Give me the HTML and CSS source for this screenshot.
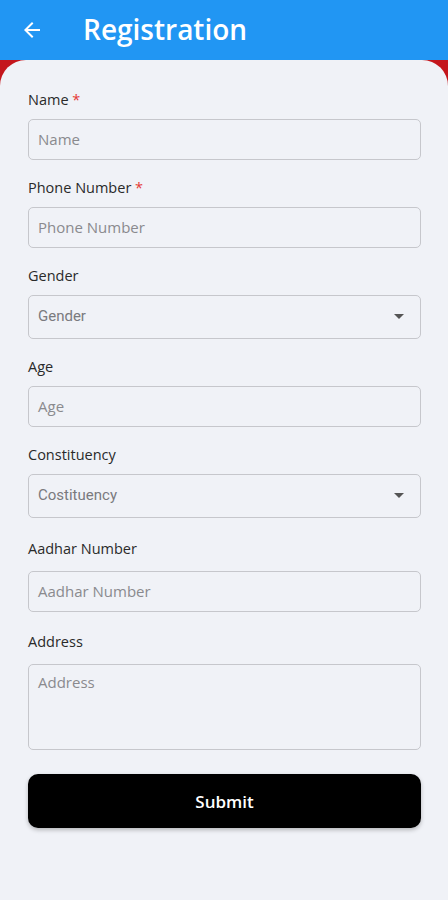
FILE: index.html
```html
<!DOCTYPE html>
<html lang="en">
<head>
<meta charset="utf-8">
<title>Registration</title>
<link rel="stylesheet" href="styles.css">
</head>
<body>
<div class="app">
  <header class="appbar">
    <svg class="back" width="24" height="24" viewBox="0 0 24 24"><path d="M20 11H7.83l5.59-5.59L12 4l-8 8 8 8 1.41-1.41L7.83 13H20v-2z" fill="#fff"/></svg>
    <h1 class="title">Registration</h1>
  </header>
  <main class="sheet">
    <form class="form">
      <div class="field">
        <label class="label">Name <span class="req">*</span></label>
        <div class="input"><span class="ph">Name</span></div>
      </div>
      <div class="field">
        <label class="label">Phone Number <span class="req">*</span></label>
        <div class="input"><span class="ph">Phone Number</span></div>
      </div>
      <div class="field">
        <label class="label">Gender</label>
        <div class="input select"><span class="ph ph-select">Gender</span><span class="caret"></span></div>
      </div>
      <div class="field">
        <label class="label">Age</label>
        <div class="input"><span class="ph">Age</span></div>
      </div>
      <div class="field">
        <label class="label">Constituency</label>
        <div class="input select"><span class="ph ph-select">Costituency</span><span class="caret"></span></div>
      </div>
      <div class="field field-wide">
        <label class="label">Aadhar Number</label>
        <div class="input"><span class="ph">Aadhar Number</span></div>
      </div>
      <div class="field field-wide field-address">
        <label class="label">Address</label>
        <div class="input textarea"><span class="ph">Address</span></div>
      </div>
      <button type="button" class="submit">Submit</button>
    </form>
  </main>
</div>
</body>
</html>
```
FILE: styles.css
```css
* { box-sizing: border-box; }
html, body { margin: 0; padding: 0; }
body {
  width: 448px;
  height: 900px;
  overflow: hidden;
  background: #c4161c;
  font-family: "Open Sans", "Noto Sans", sans-serif;
}
.app {
  display: flex;
  flex-direction: column;
  height: 900px;
}
.appbar {
  height: 60px;
  background: #2196f3;
  display: flex;
  align-items: center;
  padding-left: 20px;
  flex: none;
}
.back { display: block; }
.title {
  margin: 0 0 0 39px;
  color: #fff;
  font-size: 28px;
  font-weight: 600;
  letter-spacing: 0;
  line-height: 1;
  padding-bottom: 2px;
}
.sheet {
  flex: 1;
  background: #f0f2f7;
  border-radius: 26px 26px 0 0;
  padding: 30px 27px 0 28px;
}
.form {
  display: flex;
  flex-direction: column;
  gap: 18px;
}
.field { display: flex; flex-direction: column; gap: 9px; }
.field-wide { gap: 12px; margin-top: 3px; }
.field-address { margin-top: 2px; }
.label {
  font-size: 14.5px;
  line-height: 20px;
  color: #2a2a2a;
}
.req { color: #e53935; }
.input {
  height: 41px;
  border: 1.5px solid #c6c7cc;
  border-radius: 5px;
  display: flex;
  align-items: center;
  padding: 0 9px 2px;
}
.ph {
  font-size: 15px;
  color: #8a8a8e;
}
.select {
  height: 44px;
  justify-content: space-between;
  padding-right: 16px;
}
.ph-select {
  font-family: Roboto, "Open Sans", sans-serif;
  font-size: 15px;
  color: #7a7a7e;
}
.caret {
  width: 0;
  height: 0;
  border-left: 5px solid transparent;
  border-right: 5px solid transparent;
  border-top: 5px solid #555;
}
.textarea {
  height: 86px;
  align-items: flex-start;
  padding-top: 7px;
}
.submit {
  margin-top: 6px;
  height: 54px;
  border: none;
  border-radius: 10px;
  background: #000;
  color: #fff;
  font-family: "Open Sans", sans-serif;
  font-size: 17px;
  font-weight: 600;
  box-shadow: 0 2px 4px rgba(0,0,0,0.25);
}
```
